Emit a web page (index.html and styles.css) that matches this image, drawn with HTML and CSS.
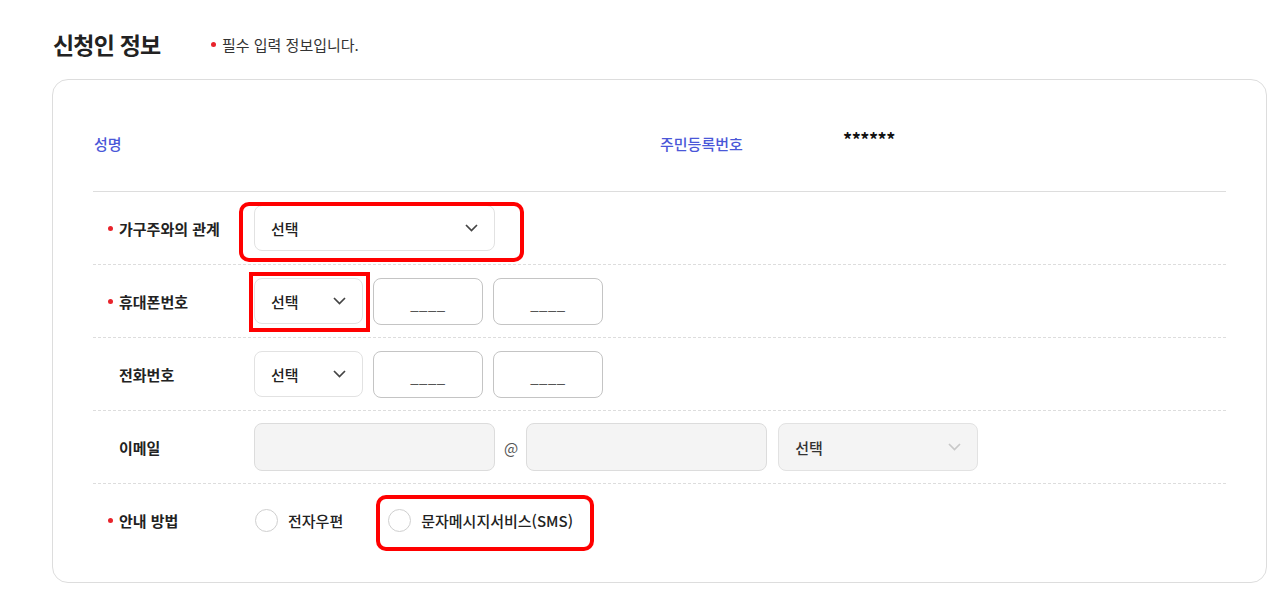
FILE: index.html
```html
<!DOCTYPE html>
<html lang="ko">
<head>
<meta charset="utf-8">
<title>신청인 정보</title>
<link rel="stylesheet" href="styles.css">
</head>
<body>
<div class="page">
  <div class="header">
    <h2 class="title">신청인 정보</h2>
    <p class="note"><span class="dot"></span>필수 입력 정보입니다.</p>
  </div>
  <div class="card">
    <div class="info-row">
      <div class="info-name">성명</div>
      <div class="info-id">주민등록번호</div>
      <div class="info-val">******</div>
    </div>

    <div class="form-row first">
      <div class="label req"><span class="dot"></span>가구주와의 관계</div>
      <div class="controls">
        <div class="wrap">
          <div class="select wide"><span>선택</span><svg class="chev" width="13" height="8" viewBox="0 0 13 8"><polyline points="1,1 6.5,6.5 12,1" fill="none" stroke="#444" stroke-width="1.7"/></svg></div>
          <span class="hl hl-rel"></span>
        </div>
      </div>
    </div>

    <div class="form-row">
      <div class="label req"><span class="dot"></span>휴대폰번호</div>
      <div class="controls">
        <div class="wrap">
          <div class="select small"><span>선택</span><svg class="chev" width="13" height="8" viewBox="0 0 13 8"><polyline points="1,1 6.5,6.5 12,1" fill="none" stroke="#444" stroke-width="1.7"/></svg></div>
          <span class="hl hl-phone"></span>
        </div>
        <div class="input">____</div>
        <div class="input">____</div>
      </div>
    </div>

    <div class="form-row">
      <div class="label">전화번호</div>
      <div class="controls">
        <div class="select small"><span>선택</span><svg class="chev" width="13" height="8" viewBox="0 0 13 8"><polyline points="1,1 6.5,6.5 12,1" fill="none" stroke="#444" stroke-width="1.7"/></svg></div>
        <div class="input">____</div>
        <div class="input">____</div>
      </div>
    </div>

    <div class="form-row">
      <div class="label">이메일</div>
      <div class="controls email">
        <div class="input gray wide"></div>
        <span class="at">@</span>
        <div class="input gray wide"></div>
        <div class="select gray mid"><span>선택</span><svg class="chev" width="13" height="8" viewBox="0 0 13 8"><polyline points="1,1 6.5,6.5 12,1" fill="none" stroke="#c8c8c8" stroke-width="1.7"/></svg></div>
      </div>
    </div>

    <div class="form-row">
      <div class="label req"><span class="dot"></span>안내 방법</div>
      <div class="controls radios">
        <label class="radio"><span class="circle"></span>전자우편</label>
        <div class="wrap">
          <label class="radio"><span class="circle"></span>문자메시지서비스(SMS)</label>
          <span class="hl hl-sms"></span>
        </div>
      </div>
    </div>
  </div>
</div>
</body>
</html>
```

FILE: styles.css
```css
* { box-sizing: border-box; }
body {
  margin: 0;
  background: #fff;
  font-family: "Noto Sans CJK KR", "Noto Sans", sans-serif;
  color: #222;
}
.page { padding-top: 28px; }
.header {
  display: flex;
  align-items: center;
  height: 32px;
  margin: 0 0 19px 53px;
}
.title {
  margin: 0;
  font-size: 23px;
  font-weight: 700;
  letter-spacing: -0.8px;
  color: #222;
  width: 158px;
}
.note {
  margin: 0;
  font-size: 15px;
  color: #333;
  display: flex;
  align-items: center;
}
.dot {
  display: inline-block;
  width: 5px;
  height: 5px;
  border-radius: 50%;
  background: #e8232b;
  margin-right: 6px;
}
.card {
  width: 1215px;
  margin-left: 52px;
  border: 1px solid #ddd;
  border-radius: 16px;
  padding: 0 40px 26px 40px;
}
.info-row {
  display: flex;
  padding: 53px 0 36px 1px;
  font-size: 15px;
  line-height: 22px;
}
.info-name, .info-id { color: #4a57d8; font-weight: 500; }
.info-name { width: 566px; }
.info-id { width: 183px; }
.info-val { font-weight: 700; font-size: 18px; margin-top: -5px; letter-spacing: -0.5px; color: #111; }
.form-row {
  display: flex;
  align-items: center;
  height: 73px;
  border-top: 1px dashed #ddd;
}
.form-row.first { border-top: 1px solid #ddd; }
.label {
  width: 161px;
  padding-left: 26px;
  font-size: 15px;
  font-weight: 700;
  color: #222;
  display: flex;
  align-items: center;
}
.label.req { padding-left: 15px; }
.controls {
  display: flex;
  align-items: center;
  gap: 10px;
}
.wrap { position: relative; }
.select {
  height: 46px;
  border: 1px solid #e2e2e2;
  border-radius: 8px;
  background: #fff;
  display: flex;
  align-items: center;
  justify-content: space-between;
  padding: 0 16px 0 16px;
  font-size: 15px;
  font-weight: 500;
  color: #222;
}
.select.wide { width: 241px; }
.select.small { width: 109px; }
.select.mid { width: 200px; }
.select.gray { background: #f4f4f4; color: #333; }
.chev { display: block; }
.input {
  width: 110px;
  height: 47px;
  border: 1px solid #c4c4c4;
  border-radius: 8px;
  display: flex;
  align-items: center;
  justify-content: center;
  padding-top: 4px;
  font-size: 15px;
  color: #555;
  letter-spacing: 0.5px;
}
.input.gray {
  background: #f4f4f4;
  border-color: #dcdcdc;
  height: 48px;
}
.input.wide { width: 241px; }
.controls.email { gap: 0; }
.at {
  font-size: 15px;
  color: #555;
  margin: 0 8px 0 9px;
}
.controls.email .select { margin-left: 11px; height: 48px; }
.radios { gap: 45px; padding-left: 1px; }
.radio {
  display: flex;
  align-items: center;
  font-size: 15px;
  font-weight: 500;
  color: #222;
}
.circle {
  width: 23px;
  height: 23px;
  border: 1px solid #cfcfcf;
  border-radius: 50%;
  margin-right: 10px;
  background: #fff;
}
.hl {
  position: absolute;
  border: 4px solid #f00;
  pointer-events: none;
}
.hl-rel { left: -15px; top: -3px; width: 285px; height: 60px; border-radius: 10px; }
.hl-phone { left: -5px; top: -6px; width: 121px; height: 60px; }
.hl-sms { left: -12px; top: -14px; width: 218px; height: 56px; border-radius: 10px; }
```
